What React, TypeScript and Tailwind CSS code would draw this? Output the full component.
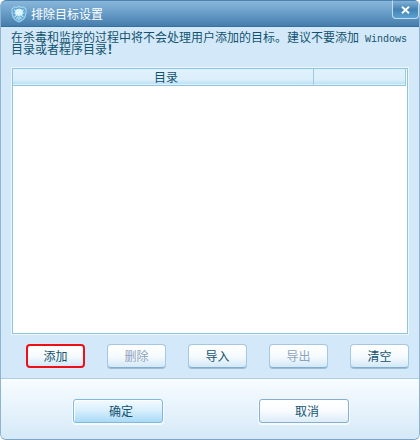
import { useState } from 'react';
import clsx from 'clsx';

interface ActionButtonProps {
  label: string;
  highlighted?: boolean;
  disabled?: boolean;
}

const actions: ActionButtonProps[] = [
  { label: '添加', highlighted: true },
  { label: '删除', disabled: true },
  { label: '导入' },
  { label: '导出', disabled: true },
  { label: '清空' },
];

function ShieldIcon() {
  return (
    <svg viewBox="0 0 16 18" className="h-[18px] w-4 shrink-0" aria-hidden="true">
      <path
        d="M8 1.2 L10 2.6 L12.4 2 L15 4 C14.8 5.6 15.2 7 14.8 9 C14.4 12.6 12 15.4 8 17 C4 15.4 1.6 12.6 1.2 9 C0.8 7 1.2 5.6 1 4 L3.6 2 L6 2.6 Z"
        fill="#5fa6d3"
        stroke="#9fd3ef"
        strokeWidth="1.2"
      />
      <path
        d="M3 4.6 L5 6 M13 4.6 L11 6 M2.6 8 H4.4 M11.6 8 H13.4 M3.6 12 L5.4 10.4 M12.4 12 L10.6 10.4 M6.4 12 L5.8 14.4 M9.6 12 L10.2 14.4 M8 12 V15.6"
        stroke="#c4e8f8"
        strokeWidth="1.1"
      />
      <circle cx="8" cy="7.6" r="3.9" fill="#dff5fe" />
      <path d="M6 10 L7.2 10.4 M10 10 L8.8 10.4" stroke="#7dbde0" strokeWidth="0.8" />
    </svg>
  );
}

function ActionButton({ label, highlighted, disabled }: ActionButtonProps) {
  return (
    <button
      type="button"
      disabled={disabled}
      className={clsx(
        'h-6 w-[59px] rounded-[4px] bg-linear-to-b from-white via-[#f7fbfe] to-[#d3e8f8] text-center',
        highlighted
          ? 'border-2 border-[#ee1018]'
          : 'border border-[#a5c7e2] border-b-[#83add0] shadow-[0_1px_0_#9cbdd8]',
        disabled ? 'text-[#8da3bb]' : 'text-[#14536f]',
      )}
    >
      {label}
    </button>
  );
}

function TitleBar({ onClose }: { onClose: () => void }) {
  return (
    <header className="flex h-[27px] items-start justify-between rounded-t-[5px] border-b border-[#35719f] bg-linear-to-b from-[#8db9dc] via-[#6ba0ca] via-45% to-[#467dac] pl-[10px] shadow-[inset_0_1px_0_#4a83b0]">
      <div className="flex h-[27px] items-center gap-1">
        <ShieldIcon />
        <h1 className="text-white">排除目标设置</h1>
      </div>
      <button
        type="button"
        aria-label="关闭"
        onClick={onClose}
        className="flex h-[19px] w-[27px] items-center justify-center rounded-b-[4px] border border-[#c0dcef] border-t-[#4a83b0] bg-linear-to-b from-[#82b2d8] via-[#4483b3] via-50% to-[#5ba2d0]"
      >
        <svg viewBox="0 0 9 8" className="h-2 w-[9px]" aria-hidden="true">
          <path d="M1 0.8 L8 7.2 M8 0.8 L1 7.2" stroke="#fff" strokeWidth="1.9" />
        </svg>
      </button>
    </header>
  );
}

function TargetTable() {
  return (
    <div className="flex-1 border border-[#8ec7dc] bg-white pr-px shadow-[0_0_0_1px_#ebf6fd]">
      <table className="w-full table-fixed border-collapse">
        <thead>
          <tr className="h-4 border-b border-[#8fc6df] bg-linear-to-b from-[#dff1fc] via-[#dbeffb] via-70% to-[#bfe0f3] text-[#14536f]">
            <th scope="col" className="border-r border-[#9ccbe2] p-0 pl-1.5 text-center leading-[15px] font-normal">
              目录
            </th>
            <th scope="col" className="w-[92px] border-r border-[#9ccbe2] p-0" aria-label="状态" />
          </tr>
        </thead>
        <tbody />
      </table>
    </div>
  );
}

export default function App() {
  const [open, setOpen] = useState(true);

  if (!open) return null;

  return (
    <div className="flex min-h-screen flex-col overflow-hidden rounded-[6px] border border-t-0 border-[#8fb4d1] border-b-[#7fa5c4] bg-[#d3e9f9] font-['Noto_Sans_CJK_SC',sans-serif] text-[12px] leading-3">
      <TitleBar onClose={() => setOpen(false)} />

      <main className="flex flex-1 flex-col">
        <p className="pt-1 pr-2 pl-[10px] text-[#14536f]">
          在杀毒和监控的过程中将不会处理用户添加的目标。建议不要添加
          <span className="font-['Liberation_Mono',monospace] text-[10px] leading-[4px]"> Windows </span>
          目录或者程序目录<b>！</b>
        </p>
        <div className="flex flex-1 flex-col px-[11px] pt-[13px]">
          <TargetTable />
        </div>
        <div className="flex justify-between pt-[10px] pr-[10px] pb-[10px] pl-[25px]">
          {actions.map((action) => (
            <ActionButton key={action.label} {...action} />
          ))}
        </div>
      </main>

      <footer className="flex h-[61px] justify-between border-t border-[#a9cfe8] bg-linear-to-b from-[#f8fcff] to-[#d5e9f8] pt-5 pr-[70px] pl-[72px] shadow-[inset_0_1px_0_#fff]">
        <button
          type="button"
          className="h-6 w-[90px] rounded-[3px] border border-[#7fb9dd] bg-linear-to-b from-[#f3fbff] via-[#d6eefc] to-[#a9daf8] pl-1.5 text-[#14536f] shadow-[0_1px_0_1px_#f4fbff,inset_1px_1px_0_#fff]"
        >
          确定
        </button>
        <button
          type="button"
          onClick={() => setOpen(false)}
          className="h-6 w-[90px] rounded-[3px] border border-[#85aed0] bg-linear-to-b from-white via-[#f9fcff] to-[#dcecf9] pl-1.5 text-[#14536f] shadow-[0_1px_0_1px_#f4fbff]"
        >
          取消
        </button>
      </footer>
    </div>
  );
}
